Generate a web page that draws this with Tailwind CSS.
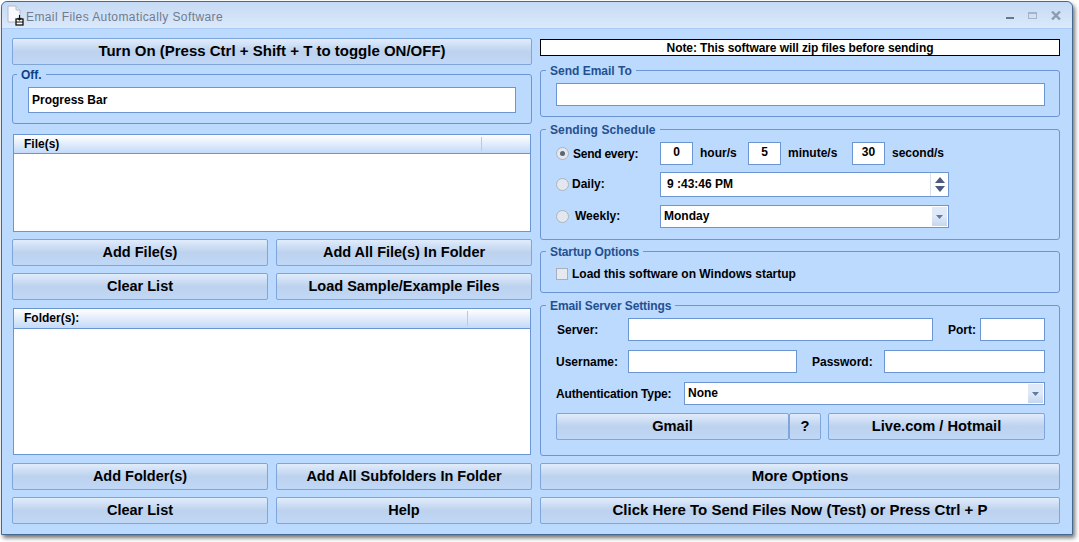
<!DOCTYPE html>
<html>
<head>
<meta charset="utf-8">
<script src="https://cdn.jsdelivr.net/npm/@tailwindcss/browser@4"></script>
</head>
<body class="w-[1079px] h-[542px] overflow-hidden bg-white font-['Liberation_Sans',Arial,sans-serif] text-[12px] font-bold text-black">
<div class="ml-px mt-px w-[1072px] h-[534px] flex flex-col rounded-t-[6px] border border-[#46688f] bg-[#bcd9fe] shadow-[2px_3px_4px_rgba(0,0,0,0.55)]">
  <!-- title bar -->
  <div class="h-[27px] shrink-0 flex items-center bg-gradient-to-b from-[#c5daf4] to-[#dbe9fb] border-b border-[#a9cbf5] rounded-t-[6px] pl-[3px] pr-[11px]">
    <svg class="w-[20px] h-[22px] shrink-0" viewBox="0 0 20 22">
      <path d="M3 2h8l4 4v12H3z" fill="#f7f9fc" stroke="#b4bccb" stroke-width="1"/>
      <path d="M11 2v4h4" fill="#dfe5ee" stroke="#b4bccb"/>
      <rect x="11" y="15" width="7" height="6" fill="#fff" stroke="#111" stroke-width="1.3"/>
      <path d="M14.5 11v5M12.6 14l1.9 2 1.9-2M11 18h7" fill="none" stroke="#111" stroke-width="1.1"/>
    </svg>
    <span class="ml-px mt-[4px] text-[12px] font-normal text-[#6f7c8f] tracking-[0.4px]">Email Files Automatically Software</span>
    <div class="ml-auto flex items-center gap-[14px]">
      <div class="w-[8px] h-[2px] mt-[5px] bg-[#66788f]"></div>
      <div class="w-[9px] h-[7px] mt-px border border-[#a3b3c9] border-t-[2px] bg-[#d3e0f2]"></div>
      <svg class="w-[10px] h-[9px]" viewBox="0 0 10 9"><path d="M1 0.5 9 8.5M9 0.5 1 8.5" stroke="#8a9cb3" stroke-width="2.4" fill="none"/></svg>
    </div>
  </div>
  <!-- body -->
  <div class="flex gap-[8px] pl-[10px] pt-[9px]">
    <!-- left column -->
    <div class="w-[520px] flex flex-col">
      <button class="h-[27px] pb-[1px] w-full rounded-[2px] border border-[#7fa5da] bg-[linear-gradient(#e1ecfb,#bcd2ee_50%,#c0d7f6)] text-[15px] font-bold">Turn On (Press Ctrl + Shift + T to toggle ON/OFF)</button>
      <div class="relative mt-[9px] h-[50px] rounded-[3px] border border-[#6b96d3] pl-[15px] pt-[12px]">
        <span class="absolute -top-[7px] left-[4px] px-[4px] bg-[#bcd9fe] text-[12px] font-bold text-[#103f88] leading-[15px]">Off.</span>
        <div class="w-[488px] h-[26px] border border-[#6b96d3] bg-white pl-[3px] text-[12px] font-bold leading-[24px]">Progress Bar</div>
      </div>
      <!-- file list -->
      <div class="mt-[10px] mx-px h-[98px] border border-[#6b96d3] bg-white">
        <div class="h-[19px] border-b border-[#6b96d3] bg-gradient-to-b from-[#ffffff] to-[#c4daf7] flex text-[12px] font-bold leading-[19px]">
          <div class="w-[468px] pl-[10px] border-r border-[#b7cbe6] my-[2px] leading-[15px]">File(s)</div>
        </div>
      </div>
      <div class="mt-[7px] grid grid-cols-2 gap-x-[8px] gap-y-[7px]">
        <button class="h-[27px] rounded-[2px] border border-[#7fa5da] bg-[linear-gradient(#e1ecfb,#bcd2ee_50%,#c0d7f6)] text-[14.5px] font-bold">Add File(s)</button>
        <button class="h-[27px] rounded-[2px] border border-[#7fa5da] bg-[linear-gradient(#e1ecfb,#bcd2ee_50%,#c0d7f6)] text-[14.5px] font-bold">Add All File(s) In Folder</button>
        <button class="h-[27px] rounded-[2px] border border-[#7fa5da] bg-[linear-gradient(#e1ecfb,#bcd2ee_50%,#c0d7f6)] text-[14.5px] font-bold">Clear List</button>
        <button class="h-[27px] rounded-[2px] border border-[#7fa5da] bg-[linear-gradient(#e1ecfb,#bcd2ee_50%,#c0d7f6)] text-[14.5px] font-bold">Load Sample/Example Files</button>
      </div>
      <!-- folder list -->
      <div class="mt-[8px] mx-px h-[147px] border border-[#6b96d3] bg-white">
        <div class="h-[20px] border-b border-[#6b96d3] bg-gradient-to-b from-[#ffffff] to-[#c4daf7] flex text-[12px] font-bold">
          <div class="w-[454px] pl-[10px] border-r border-[#b7cbe6] my-[2px] leading-[15px]">Folder(s):</div>
        </div>
      </div>
      <div class="mt-[8px] grid grid-cols-2 gap-x-[8px] gap-y-[7px]">
        <button class="h-[27px] rounded-[2px] border border-[#7fa5da] bg-[linear-gradient(#e1ecfb,#bcd2ee_50%,#c0d7f6)] text-[14.5px] font-bold">Add Folder(s)</button>
        <button class="h-[27px] rounded-[2px] border border-[#7fa5da] bg-[linear-gradient(#e1ecfb,#bcd2ee_50%,#c0d7f6)] text-[14.5px] font-bold">Add All Subfolders In Folder</button>
        <button class="h-[27px] rounded-[2px] border border-[#7fa5da] bg-[linear-gradient(#e1ecfb,#bcd2ee_50%,#c0d7f6)] text-[14.5px] font-bold">Clear List</button>
        <button class="h-[27px] rounded-[2px] border border-[#7fa5da] bg-[linear-gradient(#e1ecfb,#bcd2ee_50%,#c0d7f6)] text-[14.5px] font-bold">Help</button>
      </div>
    </div>
    <!-- right column -->
    <div class="w-[520px] pt-px flex flex-col">
      <div class="h-[17px] border border-black bg-white text-center text-[12px] tracking-[-0.08px] font-bold leading-[16px]">Note: This software will zip files before sending</div>
      <!-- send to -->
      <div class="relative mt-[14px] h-[47px] rounded-[3px] border border-[#6b96d3] pl-[15px] pt-[12px]">
        <span class="absolute -top-[7px] left-[5px] px-[4px] bg-[#bcd9fe] text-[12px] font-bold text-[#24508f] leading-[15px]">Send Email To</span>
        <div class="w-[489px] h-[23px] border border-[#6b96d3] bg-white"></div>
      </div>
      <!-- schedule -->
      <div class="relative mt-[12px] h-[111px] rounded-[3px] border border-[#6b96d3] pl-[15px] pt-[12px]">
        <span class="absolute -top-[7px] left-[5px] px-[4px] bg-[#bcd9fe] text-[12px] font-bold text-[#24508f] leading-[15px] tracking-[0.1px]">Sending Schedule</span>
        <div class="flex items-center h-[23px]">
          <span class="w-[13px] h-[13px] rounded-full border border-[#aab4c2] bg-[#e4e8ee] flex items-center justify-center"><span class="w-[5px] h-[5px] rounded-full bg-[#5d6673]"></span></span>
          <span class="ml-[4px] w-[87px] tracking-[-0.25px]">Send every:</span>
          <div class="w-[33px] h-[23px] border border-[#6b96d3] bg-white text-center leading-[19px]">0</div>
          <span class="ml-[7px] w-[48px] pb-[2px]">hour/s</span>
          <div class="w-[33px] h-[23px] border border-[#6b96d3] bg-white text-center leading-[19px]">5</div>
          <span class="ml-[7px] w-[64px] pb-[2px]">minute/s</span>
          <div class="w-[33px] h-[23px] border border-[#6b96d3] bg-white text-center leading-[19px]">30</div>
          <span class="ml-[7px] pb-[2px]">second/s</span>
        </div>
        <div class="flex items-center h-[25px] mt-[7px]">
          <span class="w-[13px] h-[13px] rounded-full border border-[#aab4c2] bg-[#e4e8ee]"></span>
          <span class="ml-[3px] w-[88px] pb-[2px]">Daily:</span>
          <div class="relative w-[289px] h-[25px] border border-[#6b96d3] bg-white pl-[6px] leading-[22px]">9 :43:46 PM
            <div class="absolute right-0 top-0 bottom-0 w-[18px] border-l border-[#d7dfea] flex flex-col items-center justify-center gap-[3px]">
              <svg class="w-[10px] h-[6px]" viewBox="0 0 10 6"><path d="M5 0 10 6H0z" fill="#4a5a7c"/></svg>
              <svg class="w-[10px] h-[6px]" viewBox="0 0 10 6"><path d="M0 0H10L5 6z" fill="#4a5a7c"/></svg>
            </div>
          </div>
        </div>
        <div class="flex items-center h-[23px] mt-[8px]">
          <span class="w-[13px] h-[13px] rounded-full border border-[#aab4c2] bg-[#e4e8ee]"></span>
          <span class="ml-[6px] w-[85px] pb-[2px]">Weekly:</span>
          <div class="relative w-[289px] h-[23px] border border-[#6b96d3] bg-white pl-[3px] leading-[21px]">Monday
            <div class="absolute right-0 top-0 bottom-0 w-[17px] border border-white bg-[linear-gradient(#dfe9f7,#dfe9f7_50%,#c4d7f0)] flex items-center justify-center">
              <svg class="w-[7px] h-[4px]" viewBox="0 0 7 4"><path d="M0 0H7L3.5 4z" fill="#5e7ba6"/></svg>
            </div>
          </div>
        </div>
      </div>
      <!-- startup -->
      <div class="relative mt-[11px] h-[42px] rounded-[3px] border border-[#6b96d3] pl-[15px] pt-[14px]">
        <span class="absolute -top-[7px] left-[5px] px-[4px] bg-[#bcd9fe] text-[12px] font-bold text-[#24508f] leading-[15px] tracking-[-0.1px]">Startup Options</span>
        <div class="flex items-center h-[15px]">
          <span class="w-[12px] h-[12px] border border-[#a5afbe] bg-[#e6e9ee]"></span>
          <span class="ml-[4px]">Load this software on Windows startup</span>
        </div>
      </div>
      <!-- server -->
      <div class="relative mt-[12px] h-[151px] rounded-[3px] border border-[#6b96d3] pl-[15px] pt-[12px]">
        <span class="absolute -top-[7px] left-[5px] px-[4px] bg-[#bcd9fe] text-[12px] font-bold text-[#24508f] leading-[15px] tracking-[-0.1px]">Email Server Settings</span>
        <div class="flex items-center h-[23px]">
          <span class="ml-px w-[71px]">Server:</span>
          <div class="w-[305px] h-[23px] border border-[#6b96d3] bg-white"></div>
          <span class="ml-[15px] w-[32px]">Port:</span>
          <div class="w-[65px] h-[23px] border border-[#6b96d3] bg-white"></div>
        </div>
        <div class="flex items-center h-[23px] mt-[9px]">
          <span class="w-[72px]">Username:</span>
          <div class="w-[169px] h-[23px] border border-[#6b96d3] bg-white"></div>
          <span class="ml-[15px] w-[72px]">Password:</span>
          <div class="w-[161px] h-[23px] border border-[#6b96d3] bg-white"></div>
        </div>
        <div class="flex items-center h-[23px] mt-[9px]">
          <span class="w-[128px] tracking-[-0.15px]">Authentication Type:</span>
          <div class="relative w-[361px] h-[23px] border border-[#6b96d3] bg-white pl-[3px] leading-[21px]">None
            <div class="absolute right-0 top-0 bottom-0 w-[17px] border border-white bg-[linear-gradient(#dfe9f7,#dfe9f7_50%,#c4d7f0)] flex items-center justify-center">
              <svg class="w-[7px] h-[4px]" viewBox="0 0 7 4"><path d="M0 0H7L3.5 4z" fill="#5e7ba6"/></svg>
            </div>
          </div>
        </div>
        <div class="flex mt-[8px]">
          <button class="w-[233px] h-[27px] pb-[2px] rounded-[2px] border border-[#7fa5da] bg-[linear-gradient(#e1ecfb,#bcd2ee_50%,#c0d7f6)] text-[14.67px] font-bold">Gmail</button>
          <button class="w-[32px] h-[27px] pb-[2px] rounded-[2px] border border-[#7fa5da] bg-[linear-gradient(#e1ecfb,#bcd2ee_50%,#c0d7f6)] text-[14.67px] font-bold">?</button>
          <button class="ml-[7px] w-[217px] h-[27px] pb-[2px] rounded-[2px] border border-[#7fa5da] bg-[linear-gradient(#e1ecfb,#bcd2ee_50%,#c0d7f6)] text-[14.67px] font-bold">Live.com / Hotmail</button>
        </div>
      </div>
      <button class="mt-[7px] h-[27px] pb-[1px] w-full rounded-[2px] border border-[#7fa5da] bg-[linear-gradient(#e1ecfb,#bcd2ee_50%,#c0d7f6)] text-[15px] font-bold">More Options</button>
      <button class="mt-[7px] h-[27px] pb-[1px] w-full rounded-[2px] border border-[#7fa5da] bg-[linear-gradient(#e1ecfb,#bcd2ee_50%,#c0d7f6)] text-[15px] font-bold">Click Here To Send Files Now (Test) or Press Ctrl + P</button>
    </div>
  </div>
</div>
</body>
</html>
